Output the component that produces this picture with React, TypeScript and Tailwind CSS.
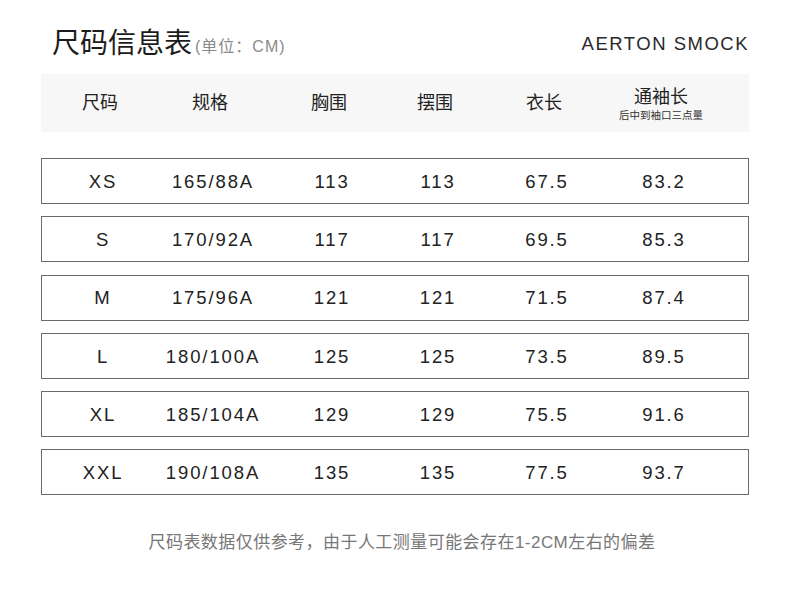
import React from 'react';

const cols = 'grid grid-cols-[118px_102px_136px_76px_142px_92px] items-center';

const rows = [
    ['XS', '165/88A', '113', '113', '67.5', '83.2'],
    ['S', '170/92A', '117', '117', '69.5', '85.3'],
    ['M', '175/96A', '121', '121', '71.5', '87.4'],
    ['L', '180/100A', '125', '125', '73.5', '89.5'],
    ['XL', '185/104A', '129', '129', '75.5', '91.6'],
    ['XXL', '190/108A', '135', '135', '77.5', '93.7'],
];

const App = () => {
    return (
        <div
            className="w-[790px] h-[602px] bg-white px-[41px] pt-[27px]"
            style={{ fontFamily: '"Liberation Sans", "Noto Sans CJK SC", sans-serif' }}
        >
            {/* Title */}
            <div className="flex items-end justify-between h-[34px] pl-[11px]">
                <div className="flex items-end">
                    <span className="text-[28px] leading-[34px] text-[#1c1c1c]">尺码信息表</span>
                    <span className="text-[16px] leading-[20px] text-[#8a8a8a] mb-[4px] ml-[3px] tracking-[1px]">(单位：CM)</span>
                </div>
                <span className="text-[18.5px] leading-[24px] text-[#2a2a2a] tracking-[1.5px] mb-[5px]">AERTON SMOCK</span>
            </div>

            {/* Header */}
            <div className={`${cols} mt-[13px] h-[58px] bg-[#f7f7f7] text-[#222] text-[18px]`}>
                {['尺码', '规格', '胸围', '摆围', '衣长'].map(h => (
                    <div key={h} className="text-center">{h}</div>
                ))}
                <div className="flex flex-col items-center pt-[2px]">
                    <span className="leading-[22px]">通袖长</span>
                    <span className="text-[10.5px] leading-[14px] text-[#333]">后中到袖口三点量</span>
                </div>
            </div>

            {/* Rows */}
            <div className="flex flex-col gap-[12.3px] mt-[26px]">
                {rows.map(r => (
                    <div key={r[0]} className={`${cols} h-[46px] border border-[#6a6a6a] text-[18.5px] text-[#222] tracking-[1.9px] pt-[1px] pl-[2px]`}>
                        {r.map((c, i) => (
                            <div key={i} className="text-center">{c}</div>
                        ))}
                    </div>
                ))}
            </div>

            {/* Footer */}
            <div className="mt-[35px] pl-[14px] text-center text-[17px] text-[#777] tracking-[0.45px]">
                尺码表数据仅供参考，由于人工测量可能会存在1-2CM左右的偏差
            </div>
        </div>
    );
};

export default App;
